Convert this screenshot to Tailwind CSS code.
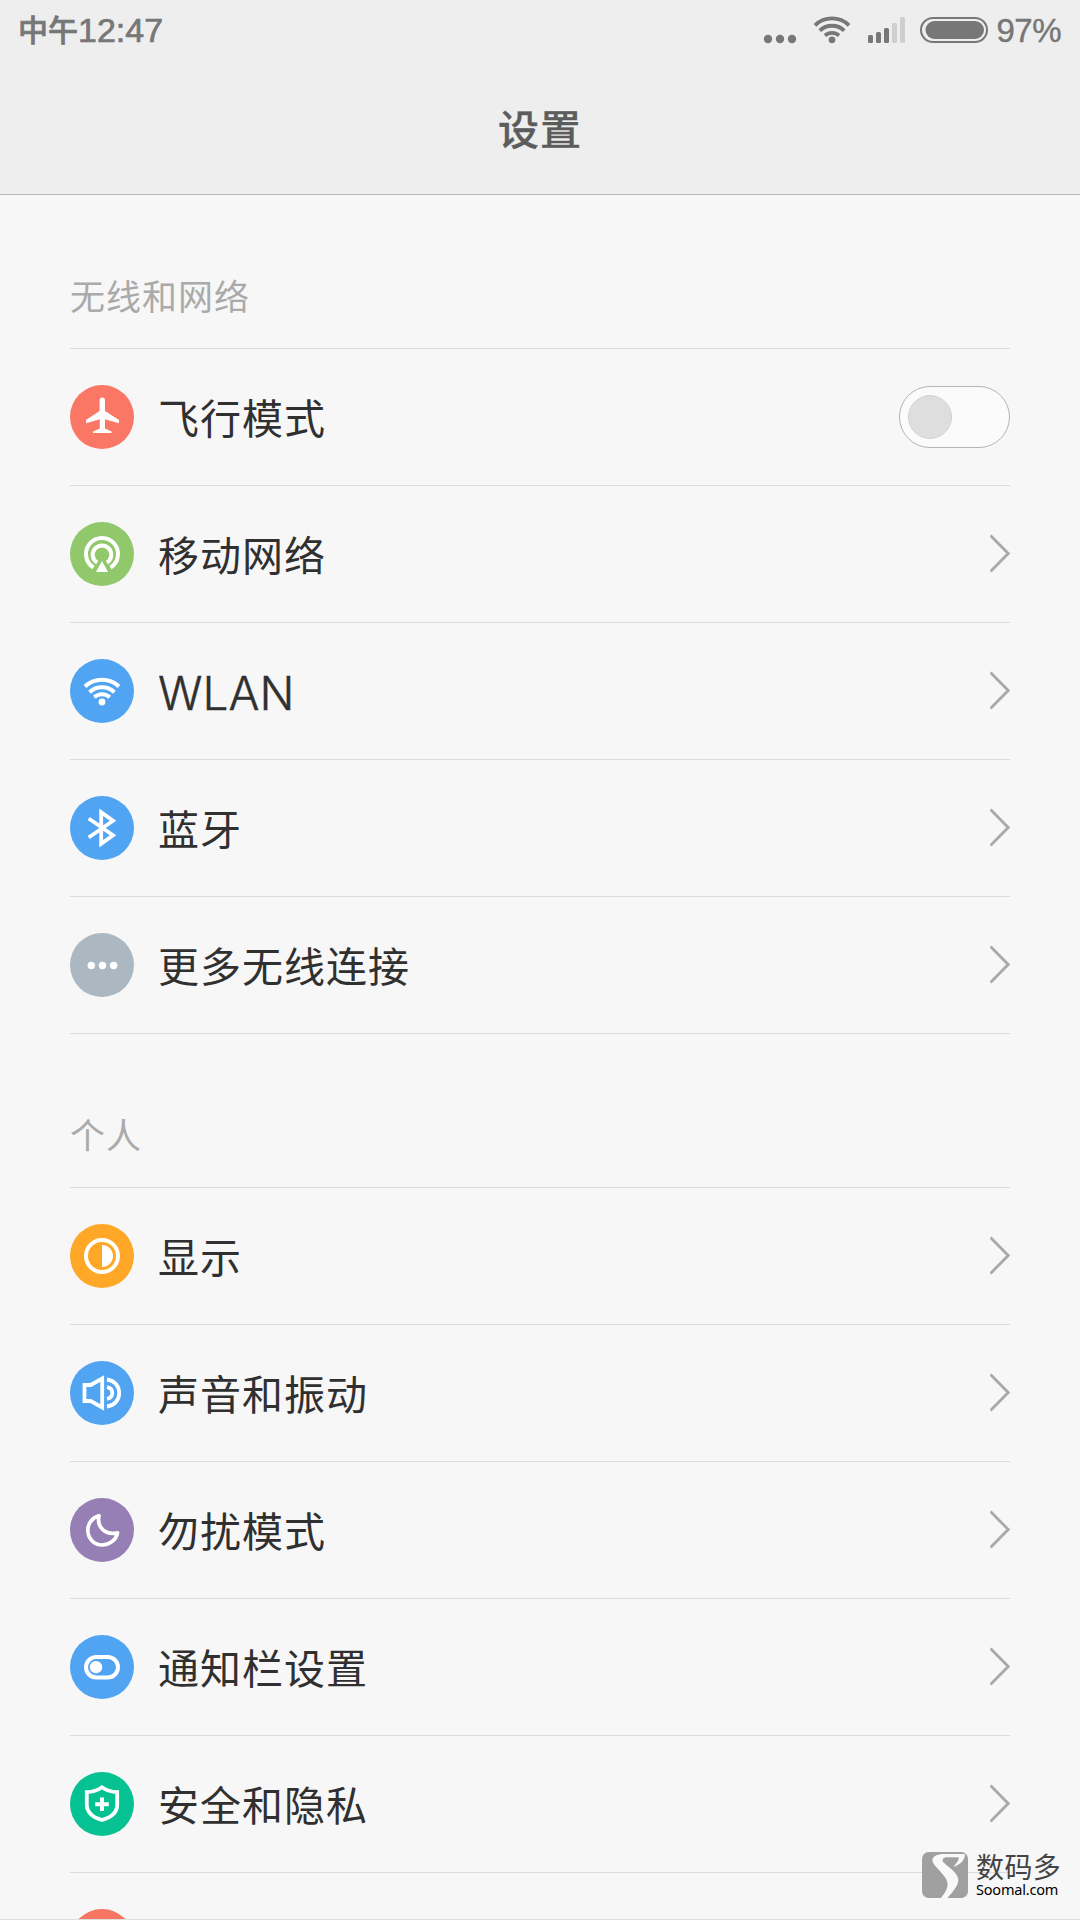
<!DOCTYPE html>
<html lang="zh-CN">
<head>
  <meta charset="UTF-8" />
  <meta name="viewport" content="width=device-width, initial-scale=1.0" />
  <title>设置</title>
  <script src="https://cdn.jsdelivr.net/npm/@tailwindcss/browser@4"></script>
</head>
<body class="bg-[#f7f7f7]">
  <div class="relative w-[1080px] h-[1920px] overflow-hidden bg-[#f7f7f7] font-['Liberation_Sans','Noto_Sans_CJK_SC',sans-serif]">

    <!-- Status bar + title -->
    <header class="h-[195px] bg-[#eeeeee] border-b border-[#b9b9b9]">
      <div class="h-[60px] pl-[18px] pr-[18px] flex items-center justify-between text-[#777777]">
        <div class="flex items-center leading-none [-webkit-text-stroke:0.7px_#777777]">
          <span class="text-[30px] pb-[5px] font-medium font-['Noto_Sans_CJK_SC',sans-serif]">中午</span><span class="text-[34px] font-['Liberation_Sans',sans-serif]">12:47</span>
        </div>
        <div class="flex items-center">
          <svg class="w-[233px] h-[60px]" viewBox="760 0 233 60" fill="#777777">
            <circle cx="768" cy="39" r="4.2" />
            <circle cx="780" cy="39" r="4.2" />
            <circle cx="792" cy="39" r="4.2" />
            <circle cx="832" cy="39.8" r="3.4" />
            <g fill="none" stroke="#777777" stroke-width="3.8">
              <path d="M815 25.3a24.5 24.5 0 0 1 34 0" />
              <path d="M819.8 30.7a17.5 17.5 0 0 1 24.4 0" />
              <path d="M825 35.7a10.2 10.2 0 0 1 14 0" />
            </g>
            <rect x="868" y="35" width="5" height="8" rx="1.5" />
            <rect x="876" y="32" width="5" height="11" rx="1.5" />
            <rect x="884" y="28" width="5" height="15" rx="1.5" />
            <rect x="892" y="23" width="5" height="20" rx="1.5" fill="#cfcfcf" />
            <rect x="900" y="17" width="5" height="26" rx="1.5" fill="#cfcfcf" />
            <rect x="921" y="18" width="66" height="24" rx="12" fill="none" stroke="#777777" stroke-width="2" />
            <rect x="925.5" y="21" width="58.5" height="18" rx="9" />
          </svg>
          <span class="w-[69px] pr-px text-right text-[33px] tracking-[-0.5px] leading-none [-webkit-text-stroke:0.4px_#777777]">97%</span>
        </div>
      </div>
      <h1 class="h-[134px] pt-[40px] text-center text-[41px] leading-[54px] tracking-[1px] font-medium text-[#5c5c5c] [-webkit-text-stroke:0.3px_#5c5c5c] font-['Noto_Sans_CJK_SC',sans-serif]">设置</h1>
    </header>

    <main id="sections" class="px-[70px]"></main>

    <!-- Watermark -->
    <div class="absolute left-[922px] top-[1852px] flex gap-2">
      <svg class="w-[46px] h-[46px]" viewBox="0 0 137 137">
        <rect width="137" height="137" rx="20" fill="#a0a0a0" />
        <path fill="#f9f9f9" d="M128 6H62C42 7 31 15 31 25C33 44 72 66 76 92C78 108 68 122 56 137H76C92 118 110 100 108 80C104 56 70 40 62 28C60 20 66 16 76 16H108C112 18 108 28 94 44C114 38 128 24 128 6Z" />
      </svg>
      <div class="flex flex-col">
        <span class="text-[28px] leading-[29px] tracking-[0.4px] text-[#444444] font-['Noto_Sans_CJK_SC',sans-serif]">数码多</span>
        <span class="text-[14.5px] leading-[17px] tracking-[-0.2px] text-black font-['Noto_Sans',sans-serif]">Soomal.com</span>
      </div>
    </div>

    <div class="absolute left-0 bottom-0 w-full h-px bg-[#dedede]"></div>
  </div>

  <script>
    // 64x64 glyphs, drawn in white over the coloured circle
    const icons = {
      plane: `<path fill="#fff" d="M32.300 12.500c-1.700 0-2.700 1.300-2.700 3v10.500L16 35v3.200l13.800-4v9.300L23 46.500v1.500h18.600v-1.500L35 43.500V34.200l14 4v-3.200L35 26v-10.500c0-1.700-1-3-2.700-3z"/>`,
      mobile: `<g fill="none" stroke="#fff" stroke-width="4"><path d="M23.500 45.500a16 16 0 1 1 17 0"/><path d="M27.100 40.600a9.300 9.300 0 1 1 9.800 0"/></g><path fill="#fff" d="M32 39l6 11H26z"/>`,
      wifi: `<circle cx="32" cy="43" r="3.400" fill="#fff"/><g fill="none" stroke="#fff" stroke-width="4"><path d="M15 27.500a25 25 0 0 1 34 0"/><path d="M19.600 33.200a18.200 18.200 0 0 1 24.800 0"/><path d="M24.300 38.300a11.300 11.300 0 0 1 15.400 0"/></g>`,
      bluetooth: `<path fill="none" stroke="#fff" stroke-width="3.800" d="M18.700 22.500L43 39.300 31.200 47.700V16.300L43 24.800 18.700 41.500"/>`,
      more: `<g fill="#fff"><circle cx="21.300" cy="32.500" r="3.700"/><circle cx="32.500" cy="32.500" r="3.700"/><circle cx="43.700" cy="32.500" r="3.700"/></g>`,
      display: `<circle cx="32" cy="32" r="16" fill="none" stroke="#fff" stroke-width="4"/><path fill="#fff" d="M32 21a11 11 0 0 1 0 22z"/>`,
      sound: `<g fill="none" stroke="#fff" stroke-width="3.800"><path d="M14.500 24h6.200L32.200 17.500v29L20.700 40h-6.200z"/><path d="M37 18.500c7.500 1 12.200 6.500 12.200 13.500s-4.700 12.500-12.200 13.500"/><path d="M37 26.200c3.500.700 5.300 3 5.300 5.800s-1.800 5.100-5.300 5.800"/></g>`,
      moon: `<path fill="none" stroke="#fff" stroke-width="3.700" stroke-linejoin="round" d="M29 17.800c-7 2-11.200 8-11.200 14.300C17.800 40.500 24 47 32.300 47c7.500 0 14-5.500 15.200-12.200C36 37.500 26.500 30 29 17.800z"/>`,
      toggle: `<rect x="16" y="22" width="32" height="20.500" rx="10.250" fill="none" stroke="#fff" stroke-width="4"/><circle cx="26" cy="32.200" r="6.200" fill="#fff"/>`,
      shield: `<path fill="none" stroke="#fff" stroke-width="3.800" d="M32 15.300c-4.500 3.200-9 4.700-15.200 4.900V32.500c0 8 6.200 13 15.200 15.500c9-2.500 15.200-7.500 15.200-15.500V20.200c-6.200-.2-10.700-1.700-15.200-4.900z"/><path stroke="#fff" stroke-width="4" d="M32 25.500v13.500M25.200 32.200h13.600"/>`,
    };

    const sections = [
      {
        title: "无线和网络",
        items: [
          { label: "飞行模式", icon: "plane", color: "bg-[#fb7765]", toggle: true },
          { label: "移动网络", icon: "mobile", color: "bg-[#92c86c]" },
          { label: "WLAN", icon: "wifi", color: "bg-[#50a4f2]", latin: true },
          { label: "蓝牙", icon: "bluetooth", color: "bg-[#50a4f2]" },
          { label: "更多无线连接", icon: "more", color: "bg-[#abb8c1]" },
        ],
      },
      {
        title: "个人",
        items: [
          { label: "显示", icon: "display", color: "bg-[#ffa726]" },
          { label: "声音和振动", icon: "sound", color: "bg-[#50a4f2]" },
          { label: "勿扰模式", icon: "moon", color: "bg-[#957fb5]" },
          { label: "通知栏设置", icon: "toggle", color: "bg-[#50a4f2]" },
          { label: "安全和隐私", icon: "shield", color: "bg-[#06c292]" },
          { label: "", icon: "", color: "bg-[#f67563]" },
        ],
      },
    ];

    const chevron = `<svg class="w-5 h-10" viewBox="0 0 20 40" fill="none" stroke="#a9a9a9" stroke-width="2.8"><path d="M0.500 1.500L18.200 19.500 0.500 37.500"/></svg>`;
    const toggle = `<div class="w-[111px] h-[62px] rounded-full border border-[#b4b4b4] bg-[#fbfbfb] flex items-center pl-2"><div class="size-11 rounded-full bg-[#dedede] border border-[#d2d2d2]"></div></div>`;

    function row(item) {
      const font = item.latin
        ? "text-[46px] font-light [-webkit-text-stroke:0.4px_#303030] font-['Inter',sans-serif] pt-1"
        : "text-[41px] tracking-[1px] pb-[3px] font-['Noto_Sans_CJK_SC',sans-serif]";
      return `
        <li class="h-[137px] border-b border-[#dcdcdc] flex items-center">
          <span class="size-16 rounded-full ${item.color}"><svg class="size-16" viewBox="0 0 64 64">${icons[item.icon] || ""}</svg></span>
          <span class="ml-6 mr-auto leading-[56px] text-[#303030] ${font}">${item.label}</span>
          ${item.toggle ? toggle : chevron}
        </li>`;
    }

    document.getElementById("sections").innerHTML = sections.map(s => `
      <section>
        <h2 class="h-[154px] pt-[75px] border-b border-[#dcdcdc] text-[35px] leading-[50px] tracking-[1px] text-[#aaaaaa] font-['Noto_Sans_CJK_SC',sans-serif]">${s.title}</h2>
        <ul>${s.items.map(row).join("")}</ul>
      </section>`).join("");
  </script>
</body>
</html>
